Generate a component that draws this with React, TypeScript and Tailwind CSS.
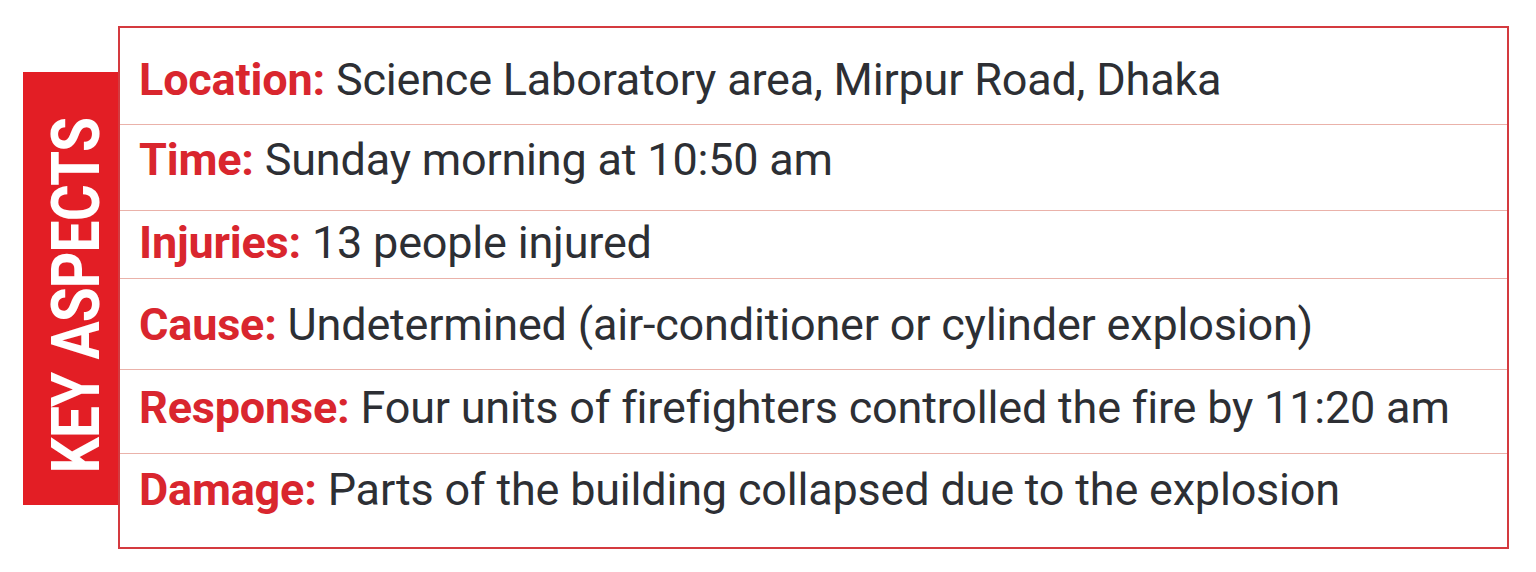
const rows = [
  { label: 'Location:', text: 'Science Laboratory area, Mirpur Road, Dhaka', h: 'h-[97px]', pt: 'pt-[29px]' },
  { label: 'Time:', text: 'Sunday morning at 10:50 am', h: 'h-[86px]', pt: 'pt-[12px]' },
  { label: 'Injuries:', text: '13 people injured', h: 'h-[68px]', pt: 'pt-[9px]' },
  { label: 'Cause:', text: 'Undetermined (air-conditioner or cylinder explosion)', h: 'h-[91px]', pt: 'pt-[23px]' },
  { label: 'Response:', text: 'Four units of firefighters controlled the fire by 11:20 am', h: 'h-[84px]', pt: 'pt-[15px]' },
  { label: 'Damage:', text: 'Parts of the building collapsed due to the explosion', h: 'h-[93px]', pt: 'pt-[13px]' },
];

export default function App() {
  return (
    <div className="w-[1536px] h-[572px] bg-white pt-[26px] pl-[23px] font-['Roboto',sans-serif]">
      <div className="flex items-start">
        <div className="w-[95px] h-[433px] mt-[46px] bg-[#e31e25] flex items-center justify-center pl-[12px] pt-[14px]">
          <span className="[writing-mode:vertical-rl] rotate-180 scale-y-[0.86] text-white font-bold text-[66px] leading-none tracking-[-1px] whitespace-nowrap">
            KEY ASPECTS
          </span>
        </div>
        <div className="w-[1391px] h-[523px] border-2 border-[#d43a3f] flex flex-col">
          {rows.map((r, i) => (
            <div
              key={r.label}
              className={`${r.h} ${r.pt} pl-[19px] pr-[3px] ${i < rows.length - 1 ? 'border-b border-[#eab2aa]' : ''}`}
            >
              <p className="text-[45px] leading-none tracking-[-0.2px] whitespace-nowrap text-[#2d2f34]">
                <span className="font-bold text-[#d9262e]">{r.label}</span> {r.text}
              </p>
            </div>
          ))}
        </div>
      </div>
    </div>
  );
}
